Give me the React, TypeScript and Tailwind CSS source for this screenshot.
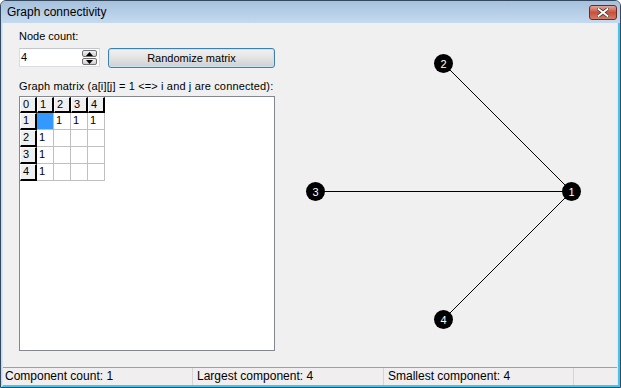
import React from "react";

const font = "font-['Liberation_Sans',Arial,sans-serif]";

function HeaderCell({ label }: { label: string }) {
  return (
    <div className="bg-[#f0f0f0] border-t border-l border-t-white border-l-white border-r-[2px] border-b-[2px] border-r-black border-b-black pl-[2px] leading-[13px] text-[11px] text-black">
      {label}
    </div>
  );
}

function DataCell({ value, selected }: { value?: string; selected?: boolean }) {
  return (
    <div
      className={
        selected
          ? "bg-[#3399ff] border-r border-b border-[#c0c0c0]"
          : "bg-white border-r border-b border-[#c0c0c0] pl-[2px] leading-[15px] text-[11px] text-black"
      }
    >
      {value}
    </div>
  );
}

function Matrix() {
  const headers = ["1", "2", "3", "4"];
  const data: (string | undefined)[][] = [
    [undefined, "1", "1", "1"],
    ["1", undefined, undefined, undefined],
    ["1", undefined, undefined, undefined],
    ["1", undefined, undefined, undefined],
  ];
  return (
    <div className="grid grid-cols-[17px_17px_17px_17px_17px] grid-rows-[16px_17px_17px_17px_17px] w-max">
      <HeaderCell label="0" />
      {headers.map((h) => (
        <HeaderCell key={h} label={h} />
      ))}
      {data.map((row, i) => (
        <React.Fragment key={i}>
          <HeaderCell label={String(i + 1)} />
          {row.map((v, j) => (
            <DataCell key={j} value={v} selected={i === 0 && j === 0} />
          ))}
        </React.Fragment>
      ))}
    </div>
  );
}

function Spinner() {
  return (
    <div className="flex flex-col gap-[1px] mr-[2px]">
      {[0, 1].map((k) => (
        <div
          key={k}
          className="w-[15px] h-[7px] rounded-[2px] border border-[#707070] bg-gradient-to-b from-[#f2f2f2] to-[#cfcfcf] flex items-center justify-center"
        >
          <svg width="7" height="4" viewBox="0 0 7 4">
            {k === 0 ? <path d="M0 4 L3.5 0 L7 4 Z" fill="#000" /> : <path d="M0 0 L3.5 4 L7 0 Z" fill="#000" />}
          </svg>
        </div>
      ))}
    </div>
  );
}

function Graph() {
  const nodes = [
    { id: "1", x: 296.5, y: 168.5 },
    { id: "2", x: 168.5, y: 40.5 },
    { id: "3", x: 40.5, y: 168.5 },
    { id: "4", x: 168.5, y: 296.5 },
  ];
  const edges: [number, number][] = [
    [0, 1],
    [0, 2],
    [0, 3],
  ];
  return (
    <svg width="341" height="343" viewBox="0 0 341 343" className="block">
      {edges.map(([a, b], i) => (
        <line
          key={i}
          x1={nodes[a].x}
          y1={nodes[a].y}
          x2={nodes[b].x}
          y2={nodes[b].y}
          stroke="#000"
          strokeWidth="1"
        />
      ))}
      {nodes.map((n) => (
        <g key={n.id}>
          <circle cx={n.x} cy={n.y} r="9.5" fill="#000" />
          <text
            x={n.x}
            y={n.y + 4}
            textAnchor="middle"
            fill="#fff"
            fontSize="11"
            fontFamily="Liberation Sans, Arial, sans-serif"
          >
            {n.id}
          </text>
        </g>
      ))}
    </svg>
  );
}

export default function App() {
  return (
    <div className={`w-[621px] h-[388px] flex flex-col bg-[#c3d9ef] border border-[#34495e] rounded-t-[6px] overflow-hidden ${font} text-[11px] text-black`}>
      {/* Title bar */}
      <div className="h-[22px] shrink-0 flex items-center justify-between bg-gradient-to-b from-[#a7c1dc] to-[#c4daf0] pl-[6px] pr-[3px]">
        <span className="text-[12px] leading-[14px] text-black">Graph connectivity</span>
        <div className="w-[28px] h-[15px] rounded-[3px] border border-[#6b2a22] bg-gradient-to-b from-[#e6a596] via-[#c8503c] to-[#d77a62] flex items-center justify-center">
          <svg width="12" height="9" viewBox="0 0 12 9">
            <path d="M1.5 1 L10.5 8 M10.5 1 L1.5 8" stroke="#3a3a3a" strokeWidth="3.4" strokeLinecap="square" />
            <path d="M1.5 1 L10.5 8 M10.5 1 L1.5 8" stroke="#fff" strokeWidth="1.8" strokeLinecap="square" />
          </svg>
        </div>
      </div>
      {/* Client area */}
      <div className="flex-1 flex flex-col ml-[1px] border-l border-[#d6e6f6] border-r-[2px] border-b-[2px] border-r-[#47c3ec] border-b-[#47c3ec]">
        <div className="flex-1 flex flex-col bg-[#f0f0f0] border-r border-[#e8e8e8]">
          <div className="flex-1 flex">
            <div className="w-[272px] shrink-0 pl-[16px] pt-[7px] flex flex-col">
              <div className="leading-[13px]">Node count:</div>
              <div className="flex mt-[5px] gap-[8px]">
                <div className="w-[81px] h-[19px] bg-white border border-[#d9dde3] border-t-[#c2c6cc] flex items-center justify-between">
                  <span className="pl-[1px] leading-[13px]">4</span>
                  <Spinner />
                </div>
                <div className="w-[167px] h-[20px] rounded-[3px] border border-[#3c7fb1] shadow-[inset_0_0_0_1px_#c4e5f6] bg-gradient-to-b from-[#f1f1f1] via-[#e3e3e3] to-[#d0d0d0] flex items-center justify-center leading-[13px]">
                  Randomize matrix
                </div>
              </div>
              <div className="mt-[12px] leading-[13px] tracking-[0.15px]">Graph matrix (a[i][j] = 1 &lt;=&gt; i and j are connected):</div>
              <div className="mt-[3px] w-[256px] h-[255px] bg-white border border-[#828790]">
                <Matrix />
              </div>
            </div>
            <div className="flex-1">
              <Graph />
            </div>
          </div>
          <div className="h-[18px] shrink-0 flex border-t border-[#a0a0a0] bg-[#f0eeee] text-[12px]">
            <div className="w-[190px] border-r border-[#d5d5d5] pl-[2px] leading-[17px]">Component count: 1</div>
            <div className="w-[191px] border-r border-[#d5d5d5] pl-[4px] leading-[17px]">Largest component: 4</div>
            <div className="w-[190px] border-r border-[#d5d5d5] pl-[4px] leading-[17px]">Smallest component: 4</div>
            <div className="flex-1" />
          </div>
        </div>
      </div>
    </div>
  );
}
